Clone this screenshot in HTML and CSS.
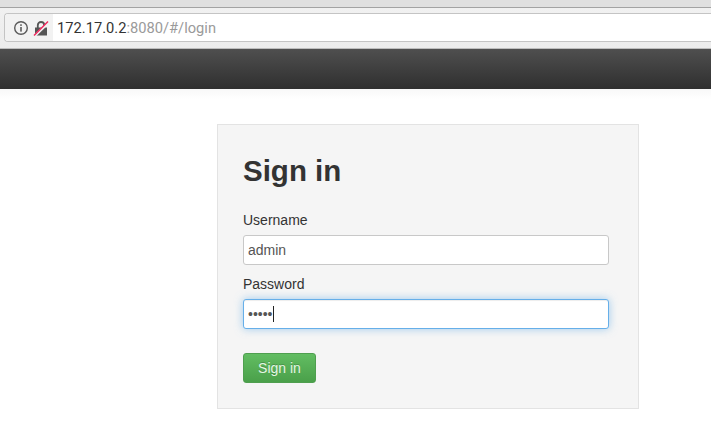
FILE: index.html
```html
<!DOCTYPE html>
<html lang="en">
<head>
    <meta charset="UTF-8">
    <title>Sign in</title>
    <link rel="stylesheet" href="styles.css">
</head>
<body>
    <div class="chrome">
        <div class="omnibox">
            <div class="site-chip">
                <svg class="icon" width="16" height="16" viewBox="0 0 16 16">
                    <circle cx="8" cy="8" r="6.3" fill="none" stroke="#5a5a5a" stroke-width="1.4"/>
                    <rect x="7.2" y="7" width="1.6" height="4.6" fill="#5a5a5a"/>
                    <rect x="7.2" y="4.3" width="1.6" height="1.6" fill="#5a5a5a"/>
                </svg>
                <svg class="icon" width="16" height="16" viewBox="0 0 16 16">
                    <path d="M4.8 8V5.2a3.2 3.2 0 0 1 6.4 0V8" fill="none" stroke="#555" stroke-width="1.8"/>
                    <rect x="2" y="7.5" width="12" height="8" fill="#555"/>
                    <path d="M1 16.5 15.6 2.6" stroke="#f2f2f2" stroke-width="2.6"/>
                    <path d="M1 15.5 15 1.5" stroke="#f0245a" stroke-width="1.4"/>
                </svg>
            </div>
            <div class="url"><span class="host">172.17.0.2</span>:8080/#/login</div>
        </div>
    </div>
    <div class="navbar"></div>
    <div class="page">
        <form class="login-box">
            <h2>Sign in</h2>
            <label for="username">Username</label>
            <div class="input">admin</div>
            <label for="password">Password</label>
            <div class="input focused"><span class="dots">•••••</span><span class="caret"></span></div>
            <button type="button" class="btn-success">Sign in</button>
        </form>
    </div>
</body>
</html>
```

FILE: styles.css
```css
body{
    margin: 0;
    background: #fff;
    font-family: "Liberation Sans", Arial, sans-serif;
    font-size: 14px;
    color: #333;
    overflow: hidden;
}
.chrome{
    height: 49px;
    box-sizing: border-box;
    padding: 13px 0 6px 4px;
    background: linear-gradient(#e0e0e0 7px, #a3a3a3 7px, #a3a3a3 8px, #f1f1f1 8px, #ececec 100%);
    border-bottom: 1px solid #bdbdbd;
}
.omnibox{
    height: 29px;
    box-sizing: border-box;
    display: flex;
    background: #fff;
    border: 1px solid #c4c4c4;
    border-right: 0;
    border-radius: 4px 0 0 4px;
}
.site-chip{
    width: 48px;
    display: flex;
    align-items: center;
    gap: 4px;
    padding-left: 8px;
    box-sizing: border-box;
    background: #f2f2f2;
    border-radius: 3px 0 0 3px;
}
.url{
    margin-left: 4px;
    font-family: Roboto, "Noto Sans", sans-serif;
    font-size: 14.7px;
    line-height: 29px;
    color: #9a9a9a;
}
.host{
    color: #333;
}
.navbar{
    height: 40px;
    background: linear-gradient(#4f4f4f, #2f2f2f);
}
.page{
    padding: 35px 0 0 217px;
    background: linear-gradient(#f8f8f8, #fff 10px);
}
.login-box{
    width: 422px;
    height: 285px;
    box-sizing: border-box;
    padding: 0 29px 0 25px;
    background: #f5f5f5;
    border: 1px solid #e3e3e3;
}
h2{
    margin: 29px 0 23px;
    font-size: 29.5px;
    line-height: 33px;
    font-weight: bold;
}
label{
    display: block;
    margin-bottom: 5px;
    line-height: 20px;
}
.input{
    height: 30px;
    box-sizing: border-box;
    display: flex;
    align-items: center;
    margin-bottom: 9px;
    padding: 0 4px;
    background: #fff;
    border: 1px solid #c8c8c8;
    border-radius: 3px;
    color: #555;
}
.focused{
    border-color: #66afe9;
    box-shadow: inset 0 1px 1px rgba(0,0,0,.075), 0 0 8px rgba(102,175,233,.6);
}
.dots{
    font-size: 14px;
    color: #555;
}
.caret{
    width: 1px;
    height: 16px;
    background: #222;
}
.btn-success{
    display: block;
    width: 73px;
    height: 30px;
    margin-top: 24px;
    padding: 0;
    font-family: inherit;
    font-size: 14px;
    color: #e4f6e4;
    background: linear-gradient(#62bd62, #4aa04a);
    border: 1px solid #4f9f4f;
    border-radius: 3px;
    text-shadow: 0 -1px 0 rgba(0,0,0,.2);
}
```
